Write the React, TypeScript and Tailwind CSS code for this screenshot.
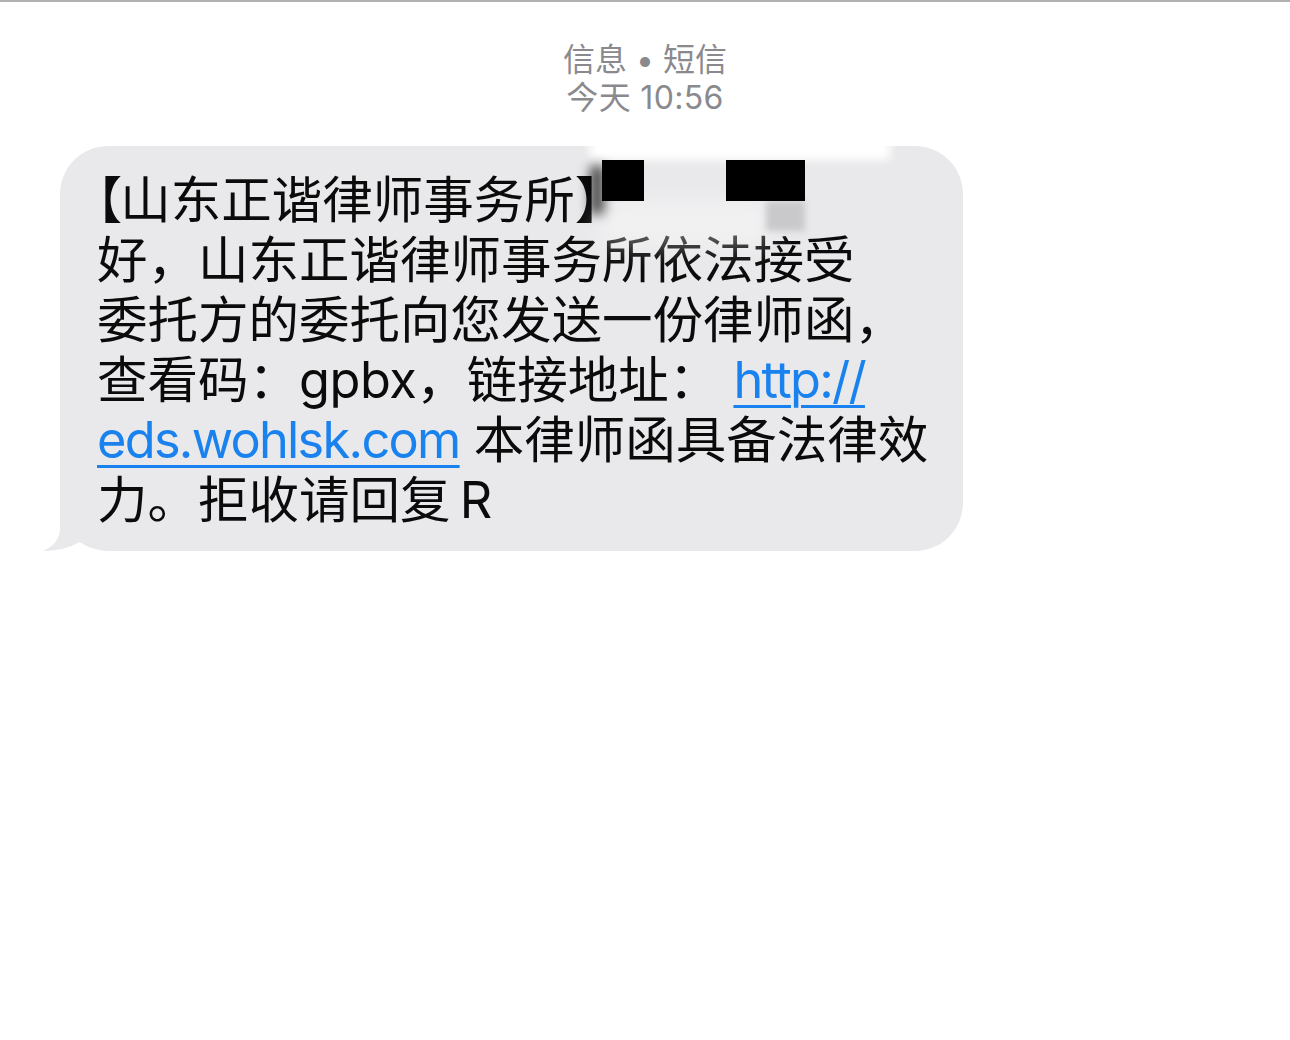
import React from 'react'

const link = 'text-[#1a82ee] underline decoration-[3px] underline-offset-[7px] tracking-[-0.034em]'

const lines: React.ReactNode[] = [
  <>
    <span className="mr-[-2px] [font-feature-settings:'halt']">【</span>山东正谐律师事务所
    <span className="[font-feature-settings:'halt']">】</span>
  </>,
  <>好，山东正谐律师事务所依法接受</>,
  <>委托方的委托向您发送一份律师函，</>,
  <>
    查看码：<span className="tracking-[-0.01em]">gpbx</span>，链接地址：{' '}
    <a href="#" className={link}>http://</a>
  </>,
  <>
    <a href="#" className={link}>eds.wohlsk.com</a> 本律师函具备法律效
  </>,
  <>力。拒收请回复{'\u2009'}R</>,
]

export default function App() {
  return (
    <div
      className="flex min-h-[1040px] w-full flex-col items-start bg-white border-t-2 border-[#b1b1b1]"
      style={{ fontFamily: 'Inter, "Noto Sans CJK SC", sans-serif' }}
    >
      {/* header */}
      <div className="flex w-full flex-col items-center pt-[39px] text-[32px] leading-[38px] text-[#8a8a8e]">
        <div>信息 • 短信</div>
        <div className="tracking-[0.01em]">今天 10:56</div>
      </div>

      {/* message bubble */}
      <div className="relative mt-[29px] ml-[60px] w-[903px] rounded-[48px] bg-[#e9e9eb] pl-[37px] pt-[24px] pb-[21px]">
        <svg className="absolute left-[-17px] bottom-0" width="80" height="60" viewBox="0 0 80 60">
          <path d="M17 0 L17 38 C17 48 10 56 0 60 C15 60 28 56 37 51 C45 56 55 60 80 60 L80 0 Z" fill="#e9e9eb" />
        </svg>

        <div className="relative flex flex-col text-[50.5px] leading-[60px] text-[#0b0b0b] whitespace-nowrap">
          {lines.map((l, i) => (
            <div key={i}>{l}</div>
          ))}
        </div>

        {/* redaction marks */}
        <div className="absolute left-[530px] top-[-8px] w-[300px] h-[22px] bg-white blur-[5px]" />
        <div className="absolute left-[540px] top-[55px] w-[170px] h-[45px] bg-white/40 blur-md" />
        <div className="absolute left-[530px] top-[20px] w-[14px] h-[48px] bg-black/70 blur-[6px]" />
        <div className="absolute left-[706px] top-[55px] w-[39px] h-[30px] bg-[#c9c9cb] blur-[3px]" />
        <div className="absolute left-[542px] top-[14px] w-[42px] h-[41px] bg-black" />
        <div className="absolute left-[666px] top-[14px] w-[79px] h-[41px] bg-black" />
      </div>
    </div>
  )
}
